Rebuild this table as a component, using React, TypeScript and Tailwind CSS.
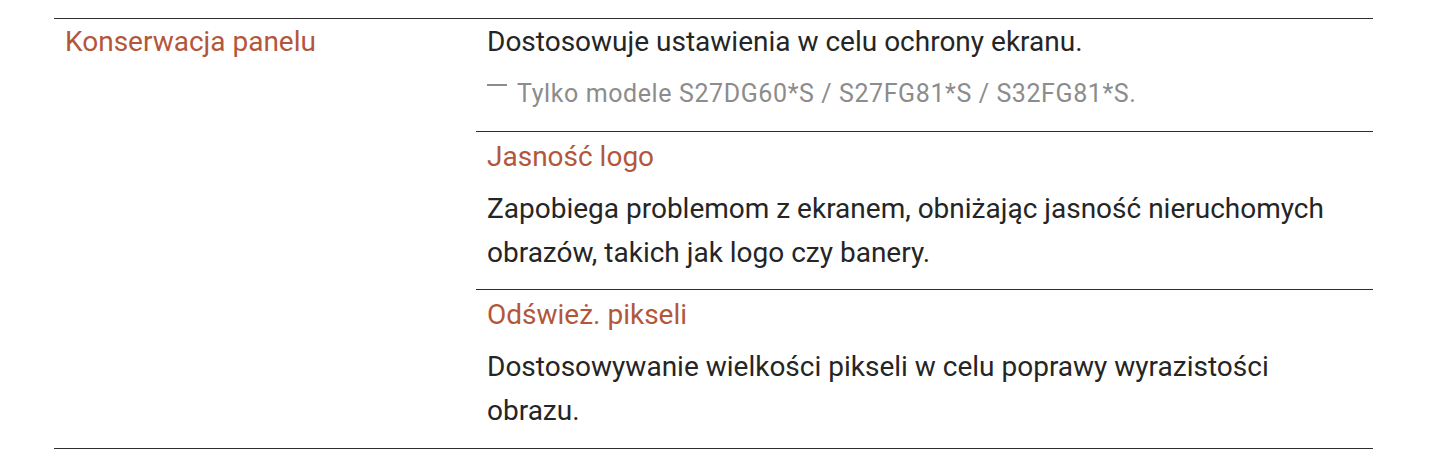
import React from "react";

export default function App() {
  return (
    <div className="bg-white w-[1440px] h-[462px] overflow-hidden font-['Roboto',sans-serif] text-[28px] leading-[44px] text-[#252525]">
      <div className="mt-[18px] ml-[54px] w-[1319px] border-y border-[#2e2e2e] flex">
        <div className="w-[422px] pl-[11px] pt-[1px] text-[#b3573b]">Konserwacja panelu</div>
        <div className="flex-1 flex flex-col">
          <div className="pl-[11px] pt-[1px] pb-[15px]">
            <div>Dostosowuje ustawienia w celu ochrony ekranu.</div>
            <div className="mt-[8px] flex items-center text-[25px] tracking-[0.6px] text-[#8c8c8c]">
              <span className="inline-block w-[20px] h-[2px] bg-[#8c8c8c] mr-[10px] -translate-y-[9px]" />
              <span>Tylko modele S27DG60*S / S27FG81*S / S32FG81*S.</span>
            </div>
          </div>
          <div className="border-t border-[#2e2e2e] pl-[11px] pt-[3px] pb-[14px]">
            <div className="text-[#b3573b]">Jasność logo</div>
            <div className="mt-[8px]">
              Zapobiega problemom z ekranem, obniżając jasność nieruchomych
              <br />
              obrazów, takich jak logo czy banery.
            </div>
          </div>
          <div className="border-t border-[#2e2e2e] pl-[11px] pt-[3px] pb-[15px]">
            <div className="text-[#b3573b]">Odśwież. pikseli</div>
            <div className="mt-[8px]">
              Dostosowywanie wielkości pikseli w celu poprawy wyrazistości
              <br />
              obrazu.
            </div>
          </div>
        </div>
      </div>
    </div>
  );
}
